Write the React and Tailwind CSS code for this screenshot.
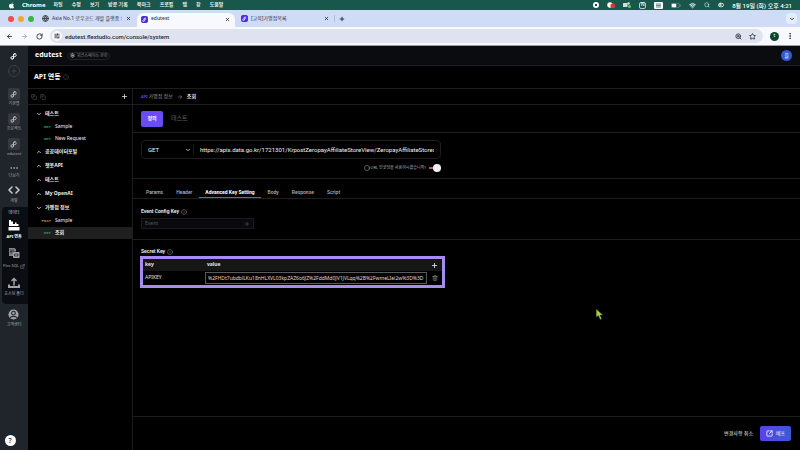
import React from 'react';
import { ArrowLeft, ArrowRight, RotateCw, SlidersHorizontal, X, Plus, ChevronDown, ChevronUp, ZoomIn, Search, Star, EllipsisVertical, Ellipsis, Settings, Circle, Info, Code, Trash2, ExternalLink, SquareArrowOutUpRight, Globe, Copy, Wifi, ToggleLeft } from 'lucide-react';
import { FaApple } from 'react-icons/fa';

const menus = ['파일', '수정', '보기', '방문 기록', '북마크', '프로필', '탭', '창', '도움말'];

const apiGroups = [
  {
    name: '테스트',
    open: true,
    items: [
      { method: 'GET', name: 'Sample' },
      { method: 'GET', name: 'New Request' },
    ],
  },
  { name: '공공데이터포털', open: false, items: [] },
  { name: '챗봇API', open: false, items: [] },
  { name: '테스트', open: false, items: [] },
  { name: 'My OpenAI', open: false, items: [] },
  {
    name: '가맹점 정보',
    open: true,
    items: [
      { method: 'POST', name: 'Sample' },
      { method: 'GET', name: '조회', active: true },
    ],
  },
];

const requestTabs = ['Params', 'Header', 'Advanced Key Setting', 'Body', 'Response', 'Script'];

const FlexLogo = ({ className }) => (
  <svg viewBox="0 0 16 16" className={className} fill="none" stroke="currentColor" strokeWidth="2" strokeLinecap="round">
    <path d="M7 12.5a2.6 2.6 0 1 1-2.6-3.2h4.8a3 3 0 1 0-2.4-4.6" />
    <path d="M7 12.5V6.2a2.8 2.8 0 0 1 2.8-2.8" />
  </svg>
);

// Small blue square used as the site's favicon
const Favicon = () => (
  <span className="flex size-[7px] shrink-0 items-center justify-center rounded-xs bg-[#4a2fd8] text-white">
    <FlexLogo className="size-[5px]" />
  </span>
);

const MacMenuBar = () => (
  <div className="flex h-2.5 shrink-0 items-center bg-[#19574d] pr-2 pl-2 text-[5px] font-medium text-white">
    <FaApple className="mr-[7px] size-[7px]" />
    <span className="mr-2 text-[6px] font-bold">Chrome</span>
    <nav className="flex gap-[9px]">
      {menus.map((menu) => (
        <span key={menu}>{menu}</span>
      ))}
    </nav>
    <div className="ml-auto flex items-center gap-2">
      <span className="size-[6px] rounded-full border-2 border-white bg-black" />
      <svg viewBox="0 0 16 12" className="h-[6px] w-2">
        <circle cx="6" cy="6" r="5.5" fill="#fff" />
        <rect x="7" y="3" width="9" height="9" rx="3" fill="#e0382b" />
      </svg>
      <svg viewBox="0 0 16 12" className="h-[6px] w-2">
        <rect x="0" y="2" width="9" height="8" rx="1" fill="#cfe0dc" />
        <circle cx="11" cy="3" r="2.5" fill="#cfe0dc" />
        <circle cx="13" cy="9" r="3" fill="#5bd04d" />
      </svg>
      <span className="flex size-[7px] items-center justify-center rounded-xs border border-white/70 text-[5px]">N</span>
      <svg viewBox="0 0 18 14" className="h-[7px] w-[9px]">
        <rect width="18" height="14" rx="2" fill="#fff" />
        <path d="M4 4h10M4 7h10M4 10h10" stroke="#19574d" strokeWidth="1.4" />
      </svg>
      <svg viewBox="0 0 20 10" className="h-[5px] w-2.5">
        <rect x="0.5" y="0.5" width="16" height="9" rx="2.5" fill="none" stroke="#8fb0aa" />
        <rect x="1.5" y="1.5" width="9" height="7" rx="1.5" fill="#fff" />
        <path d="M18.5 3.5v3" stroke="#8fb0aa" strokeWidth="1.5" />
      </svg>
      <Wifi className="size-[7px]" strokeWidth={3} />
      <Search className="size-[6px]" strokeWidth={2} />
      <ToggleLeft className="size-[6px]" strokeWidth={3} />
      <span className="font-['Roboto','Noto_Sans_CJK_KR',sans-serif] text-[6px]">8월 19일 (화) 오후 4:21</span>
    </div>
  </div>
);

const TabStrip = () => (
  <div className="flex h-[17px] shrink-0 items-stretch bg-[#d0dbf6] text-[5px] text-[#303540]">
    <div className="flex items-center gap-[3px] pr-2 pl-2">
      <span className="size-[6px] rounded-full bg-[#ee4d49]" />
      <span className="mx-px size-[6px] rounded-full bg-[#f0a92e]" />
      <span className="size-[6px] rounded-full bg-[#35b54a]" />
    </div>
    <div className="flex w-[95px] items-center gap-[3px] pr-[6px]">
      <Globe className="size-[7px] shrink-0" strokeWidth={3} />
      <span className="flex-1 whitespace-nowrap">Asia No.1 로우코드 개발 플랫폼 :</span>
      <button aria-label="탭 닫기"><X className="size-[5px]" strokeWidth={4} /></button>
    </div>
    <div className="mt-[3px] flex w-[98px] items-center gap-[3px] rounded-t-md bg-[#f8f9fe] pr-[5px] pb-[2px] pl-1 font-medium">
      <Favicon />
      <span className="flex-1">edutest</span>
      <button aria-label="탭 닫기"><X className="size-[5px]" strokeWidth={4} /></button>
    </div>
    <div className="flex w-[99px] items-center gap-[3px] pr-[5px] pl-[6px]">
      <Favicon />
      <span className="flex-1">[교육]가맹점목록</span>
      <button aria-label="탭 닫기"><X className="size-[5px]" strokeWidth={4} /></button>
    </div>
    <span className="my-[5px] w-px bg-[#a9c0ee]" />
    <button aria-label="새 탭" className="px-1"><Plus className="size-[6px]" strokeWidth={4} /></button>
    <button aria-label="탭 검색" className="my-[3px] mr-[3px] ml-auto flex w-[11px] items-center justify-center rounded-sm bg-[#e6ecfb]">
      <ChevronDown className="size-[6px]" strokeWidth={4} />
    </button>
  </div>
);

const AddressBar = () => (
  <div className="flex h-[19px] shrink-0 items-center border-b border-[#9a9ca0] bg-[#f8f9fe] pr-[6px] pl-[6px] text-[#30343c]">
    <button aria-label="뒤로"><ArrowLeft className="size-[7px]" strokeWidth={3} /></button>
    <button aria-label="앞으로" className="mx-2 text-[#a5a8b0]"><ArrowRight className="size-[7px]" strokeWidth={3} /></button>
    <button aria-label="새로고침"><RotateCw className="size-[7px]" strokeWidth={3} /></button>
    <div className="mx-[7px] flex h-3.5 flex-1 items-center gap-[3px] rounded-full bg-[#dfe3ef] pr-[7px] pl-[2px]">
      <span className="flex size-2.5 items-center justify-center rounded-full bg-[#f8f9fe]">
        <SlidersHorizontal className="size-[6px]" strokeWidth={3} />
      </span>
      <input
        aria-label="주소"
        defaultValue="edutest.flextudio.com/console/system"
        className="h-3 flex-1 bg-transparent font-['Roboto',sans-serif] text-[6px] font-medium text-[#25282e] outline-none"
      />
      <button aria-label="확대"><ZoomIn className="size-[7px]" strokeWidth={3} /></button>
      <button aria-label="북마크 추가" className="ml-1"><Star className="size-[7px]" strokeWidth={3} /></button>
    </div>
    <span className="flex size-[9px] items-center justify-center rounded-full bg-[#0b4434] text-[5px] text-white">t</span>
    <button aria-label="메뉴" className="ml-[7px]"><EllipsisVertical className="size-[8px]" strokeWidth={3} /></button>
  </div>
);

const AppTile = ({ label }) => (
  <button className="flex h-[25px] w-full shrink-0 flex-col items-center gap-px">
    <span className="flex size-3 items-center justify-center rounded-xs bg-[#35383d] text-[#b9bbbf]">
      <FlexLogo className="size-2" />
    </span>
    <span>{label}</span>
  </button>
);

const SideBar = () => (
  <aside className="flex w-7 shrink-0 flex-col items-center bg-[#20242b] text-[4px] leading-[6px] text-[#a3a6ac]">
    <FlexLogo className="mt-[6px] size-2 text-white" />
    <button aria-label="앱 추가" className="mt-[5px] mb-[11px] flex size-3 shrink-0 items-center justify-center rounded-full border border-[#3b3f46] text-[#555960]">
      <Plus className="size-[6px]" />
    </button>
    <AppTile label="기본앱" />
    <AppTile label="프로젝트" />
    <AppTile label="edutest" />
    <button className="flex w-full flex-col items-center">
      <Ellipsis className="size-[10px]" strokeWidth={2} />
      <span>더보기</span>
    </button>
    <button className="mt-[5px] mb-[3px] flex w-full flex-col items-center gap-[2px]">
      <Code className="size-3 text-[#c9cbd0]" strokeWidth={3} />
      <span>개발</span>
    </button>
    <div className="flex w-full flex-col items-center pl-[2px]">
      <div className="flex w-full flex-col items-center rounded-l-sm bg-[#0b0d12] pt-[3px] pr-[2px] pb-[7px]">
        <span className="text-[#c5c7cb]">데이터</span>
        <button className="mt-[3px] flex flex-col items-center gap-[3px] text-white">
          <svg viewBox="0 0 24 24" className="size-3" fill="currentColor">
            <path d="M2 14V2h4v3h4v5h4V7h3v3h4v4z" />
            <path d="M1 16h22v7H1z" />
          </svg>
          <span className="font-bold whitespace-nowrap">API 연동</span>
        </button>
        <button className="mt-[7px] flex flex-col items-center gap-1">
          <svg viewBox="0 0 24 24" className="size-3">
            <path d="M2 2h11l3 3v4h-6v9H2z" fill="#85888e" />
            <path d="M4 6h8M4 9h5M4 12h5" stroke="#0b0d12" strokeWidth="1.4" />
            <rect x="10" y="10" width="13" height="12" rx="1.5" fill="#a1a3a8" />
            <path d="M13 14h7v4h-7z" fill="none" stroke="#0b0d12" strokeWidth="1.3" />
          </svg>
          <span className="flex items-center gap-px whitespace-nowrap">
            Flex SQL <ExternalLink className="size-[5px]" />
          </span>
        </button>
        <button className="mt-2 flex flex-col items-center gap-[2px]">
          <svg viewBox="0 0 24 24" className="size-3" fill="none" stroke="#a1a3a8" strokeWidth="3">
            <path d="M12 17V3M7 8l5-5 5 5" />
            <path d="M2 15v5h20v-5" strokeWidth="4" />
          </svg>
          <span className="whitespace-nowrap">호스팅 폴더</span>
        </button>
      </div>
    </div>
    <button className="mt-[5px] flex flex-col items-center gap-[2px]">
      <svg viewBox="0 0 24 24" className="size-[11px]">
        <circle cx="12" cy="12" r="11" fill="#a1a3a8" />
        <circle cx="12" cy="9" r="4" fill="none" stroke="#20242b" strokeWidth="2.4" />
        <path d="M4.5 19c2-4 13-4 15 0" fill="none" stroke="#20242b" strokeWidth="2.4" />
      </svg>
      <span className="whitespace-nowrap">고객센터</span>
    </button>
    <button aria-label="도움말" className="mt-auto mr-2 mb-1 flex size-[11px] shrink-0 items-center justify-center rounded-full bg-white text-[7px] font-medium text-[#222]">
      ?
    </button>
  </aside>
);

const ApiTree = () => (
  <div className="w-[105px] shrink-0 border-r border-[#1d1d1f]">
    <div className="flex h-4 items-center gap-[3px] border-b border-[#1d1d1f] pr-1 pl-[3px]">
      <button aria-label="모두 펼치기" className="text-[#5a5a5d]"><Copy className="size-[6px]" /></button>
      <button aria-label="모두 접기" className="text-[#5a5a5d]"><Copy className="size-[6px]" /></button>
      <button aria-label="API 추가" className="ml-auto text-[#d4d4d4]"><Plus className="size-[7px]" strokeWidth={3} /></button>
    </div>
    <ul className="pt-[2px] text-[5px] text-[#f0f0f0]">
      {apiGroups.map((group, index) => (
        <li key={index}>
          <button className="flex h-3.5 w-full items-center gap-[3px] pl-2 font-bold">
            {group.open ? <ChevronDown className="size-[6px]" strokeWidth={3} /> : <ChevronUp className="size-[6px]" strokeWidth={3} />}
            {group.name}
          </button>
          {group.items.map((item) => (
            <button
              key={item.name}
              className={`flex h-3 w-full items-center gap-1 ${item.active ? 'bg-[#1f1f20] font-bold' : ''}`}
            >
              <span className={`w-[23px] text-right font-mono text-[4px] font-bold ${item.method === 'POST' ? 'text-[#c08a26]' : 'text-[#239058]'}`}>
                {item.method}
              </span>
              {item.name}
            </button>
          ))}
        </li>
      ))}
    </ul>
  </div>
);

const RequestForm = () => (
  <div>
    {/* Breadcrumb */}
    <div className="flex h-4 items-center gap-1 border-b border-[#1d1d1f] px-2 text-[5px] text-[#9b9b9e]">
      <span className="flex items-center gap-px">
        <span className="text-[4px] font-bold text-[#5a44e0] italic">API</span>
        가맹점 정보
      </span>
      <ArrowRight className="size-[6px]" />
      <span className="font-bold text-[#e5e5e5]">조회</span>
    </div>

    <div className="flex h-7 items-center gap-2 border-b border-[#1d1d1f] px-2 text-[6px]">
      <button className="h-4 w-[22px] rounded-xs bg-[#6a4cf5] text-[5px] font-bold text-white">정의</button>
      <button className="text-[#606064]">테스트</button>
    </div>

    {/* Method and URL */}
    <div className="h-[46px] border-b border-[#1d1d1f] px-2 pt-[7px]">
      <div className="w-[300px] max-w-full">
        <div className="flex h-[19px] items-center rounded-sm border border-[#1d1d1f] px-[6px] font-['Roboto',sans-serif] text-[6px] text-[#f0f0f0]">
          <div className="flex w-[46px] items-center justify-between border-r border-[#1d1d1f] pr-[2px]">
            <select aria-label="요청 방식" defaultValue="GET" className="w-8 appearance-none bg-black outline-none">
              <option>GET</option>
              <option>POST</option>
            </select>
            <ChevronDown className="size-[6px]" strokeWidth={3} />
          </div>
          <input
            aria-label="URL"
            defaultValue="https://apis.data.go.kr/1721301/KrpostZeropayAffiliateStoreView/ZeropayAffiliateStoresInfo"
            className="ml-[6px] min-w-0 flex-1 bg-transparent outline-none"
          />
        </div>
        <label className="mt-1 flex items-center justify-end gap-px text-[4px] leading-[9px] text-[#b5b5b8]">
          <Circle className="size-[6px]" strokeWidth={2} />
          URL 인코딩을 사용하시겠습니까?
          <span className="relative ml-[2px] flex h-2 w-3 items-center">
            <input type="checkbox" defaultChecked className="peer absolute inset-0 appearance-none" />
            <span className="h-[2px] w-full bg-[#b8506a]" />
            <span className="absolute right-0 size-2 rounded-full bg-[#f2f2f2]" />
          </span>
        </label>
      </div>
    </div>

    <nav className="flex h-5 items-stretch gap-px border-b border-[#1d1d1f] px-[7px] pt-[10px] font-['Roboto',sans-serif] text-[5px] font-medium text-[#b4b4b8]">
      {requestTabs.map((tab) => (
        <button
          key={tab}
          className={`border-b px-1.5 pb-[2px] leading-[6px] ${tab === 'Advanced Key Setting' ? 'border-[#4a64f0] font-bold text-white' : 'border-transparent'}`}
        >
          {tab}
        </button>
      ))}
    </nav>

    {/* Event config key */}
    <div className="h-[41px] border-b border-[#1d1d1f] px-2 pt-2">
      <label htmlFor="event" className="flex items-center gap-[2px] font-['Roboto',sans-serif] text-[5px] leading-[9px] font-bold text-[#e5e5e5]">
        Event Config Key <Info className="size-[6px] text-[#8a8a8d]" strokeWidth={2} />
      </label>
      <div className="mt-[2px] flex h-[11px] w-[113px] items-center border border-[#1a1a1e] bg-[#0a0a0e] px-[3px] text-[#66666a]">
        <input id="event" placeholder="Event" className="min-w-0 flex-1 bg-transparent text-[5px] outline-none placeholder:text-[#56565a]" />
        <button aria-label="이벤트 추가"><Plus className="size-[6px]" /></button>
      </div>
    </div>

    {/* Secret key */}
    <div className="px-2 pt-[7px]">
      <h2 className="flex items-center gap-[2px] font-['Roboto',sans-serif] text-[5px] leading-[9px] font-bold text-[#e5e5e5]">
        Secret Key <Info className="size-[6px] text-[#8a8a8d]" strokeWidth={2} />
      </h2>
      <div className="-ml-px w-[305px] max-w-full border-3 border-[#a78bf0] text-[5px] text-[#e5e5e5]">
        <table className="w-full table-fixed">
          <thead>
            <tr className="h-3 bg-[#161617] text-left">
              <th className="w-[62px] pl-[2px]">key</th>
              <th className="pl-[2px]">value</th>
              <th className="w-[15px]">
                <button aria-label="키 추가" className="flex w-full justify-center"><Plus className="size-[7px]" strokeWidth={3} /></button>
              </th>
            </tr>
          </thead>
          <tbody>
            <tr className="h-[14px]">
              <td className="pl-[2px]">APIKEY</td>
              <td>
                <input
                  aria-label="value"
                  defaultValue="%2FHDt7ubdblLKu18nHLXVL03kpZAZ6o6JZ%2FddMd0JV1JVLqq%2B%2FwmeLIei2w%3D%3D"
                  className="block h-3 w-full border border-[#5a5a5d] bg-transparent px-[2px] text-[#f0d6cf] outline-none"
                />
              </td>
              <td>
                <button aria-label="삭제" className="flex w-full justify-center text-[#a0a0a3]"><Trash2 className="size-[6px]" /></button>
              </td>
            </tr>
          </tbody>
        </table>
      </div>
    </div>
  </div>
);

const App = () => {
  return (
    <div className="flex min-h-screen flex-col bg-black font-['Noto_Sans','Noto_Sans_CJK_KR',sans-serif]">
      <MacMenuBar />
      <TabStrip />
      <AddressBar />
      <div className="relative flex flex-1">
        <SideBar />
        <div className="flex min-w-0 flex-1 flex-col">
          <header className="flex h-5 items-center gap-[5px] border-b border-[#1a1b1f] bg-[#0b0c10] pr-2 pl-[7px] text-white">
            <h1 className="text-[7px] font-bold">edutest</h1>
            <button className="flex h-2 items-center gap-[2px] rounded-full border border-[#222328] px-[2px] text-[4px] text-[#8b8c90]">
              <Settings className="size-[5px] text-[#c5c5c8]" strokeWidth={3} />
              워크스페이스 관리
            </button>
            <span className="ml-auto flex size-[11px] items-center justify-center rounded-full bg-[#3359d4] text-[5px] leading-none">플</span>
          </header>
          <div className="flex h-[23px] items-center gap-[2px] border-b border-[#1d1d1f] pl-[6px] text-[7px] font-bold text-white">
            API 연동 <Info className="size-[6px] text-[#4a4a4d]" strokeWidth={2} />
          </div>
          <div className="flex flex-1">
            <ApiTree />
            <main className="flex min-w-0 flex-1 flex-col">
              <RequestForm />
              <footer className="mt-auto flex h-[34px] items-center justify-end gap-[7px] border-t border-[#1d1d1f] pr-[9px] text-[5px] text-[#f0f0f0]">
                <button>변경사항 취소</button>
                <button className="flex h-[15px] w-[31px] items-center justify-center gap-[3px] rounded-xs bg-linear-to-r from-[#5a42e6] to-[#3859d8]">
                  <SquareArrowOutUpRight className="size-[7px]" strokeWidth={3} /> 배포
                </button>
              </footer>
            </main>
          </div>
        </div>

        {/* Mouse pointer */}
        <svg viewBox="0 0 12 20" className="absolute top-[263px] left-[596px] h-[11px] w-[7px]">
          <path d="M0 0v15l4-3 3 7 3-1-3-7h5z" fill="#a4d82c" stroke="#3a1a70" strokeWidth="0.8" />
        </svg>
      </div>
    </div>
  );
};

export default App;
